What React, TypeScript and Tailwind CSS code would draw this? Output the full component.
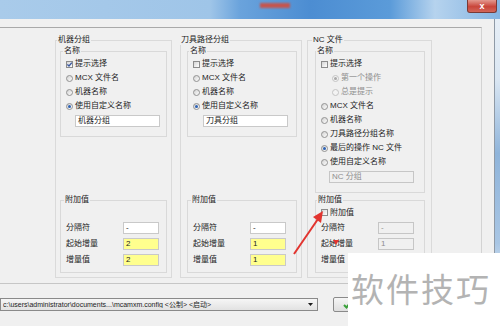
import React from 'react';

type Tone = 'white' | 'yellow' | 'disabled';

function CheckBox({ checked = false, disabled = false }: { checked?: boolean; disabled?: boolean }) {
  return (
    <span
      className={`w-[7px] h-[7px] shrink-0 border flex items-center justify-center ${
        disabled ? 'border-[#c0c0c0] bg-[#f4f4f4]' : 'border-[#8c8c8c] bg-[linear-gradient(135deg,#d4d4d4,#ffffff)]'
      }`}
    >
      {checked && (
        <svg width="5" height="5" viewBox="0 0 5 5">
          <path d="M0.4 2.4 L2 4 L4.8 0.6" fill="none" stroke="#3a58a0" strokeWidth="1.3" />
        </svg>
      )}
    </span>
  );
}

function Radio({ checked = false, disabled = false }: { checked?: boolean; disabled?: boolean }) {
  return (
    <span
      className={`w-[7px] h-[7px] shrink-0 rounded-full border flex items-center justify-center ${
        disabled ? 'border-[#c4c4c4] bg-[#f3f3f3]' : 'border-[#929292] bg-[linear-gradient(135deg,#d2d2d2,#fdfdfd)]'
      }`}
    >
      {checked && (
        <span className={`w-[3px] h-[3px] rounded-full ${disabled ? 'bg-[#a9a9a9]' : 'bg-[#2d62b4]'}`} />
      )}
    </span>
  );
}

function Option({
  kind,
  label,
  checked,
  disabled,
  indent,
}: {
  kind: 'check' | 'radio';
  label: string;
  checked?: boolean;
  disabled?: boolean;
  indent?: boolean;
}) {
  return (
    <div className={`h-[14px] flex items-center gap-[2px] ${indent ? 'pl-[11px]' : ''}`}>
      {kind === 'check' ? <CheckBox checked={checked} disabled={disabled} /> : <Radio checked={checked} disabled={disabled} />}
      <span className={disabled ? 'text-[#8e8e8e]' : 'text-[#1c1c1c]'}>{label}</span>
    </div>
  );
}

function Field({ value, tone, className = '' }: { value: string; tone: Tone; className?: string }) {
  const look =
    tone === 'yellow'
      ? 'bg-[#ffff8e] border-[#c9c9c9] text-[#1c1c1c]'
      : tone === 'disabled'
      ? 'bg-[#f0f0f0] border-[#c6c6c6] text-[#8e8e8e]'
      : 'bg-white border-[#c9c9c9] text-[#1c1c1c]';
  return <div className={`h-[12px] border flex items-center pl-[2px] ${look} ${className}`}>{value}</div>;
}

function ValueRow({ label, value, tone }: { label: string; value: string; tone: Tone }) {
  return (
    <div className="h-[16px] flex items-center">
      <span className="w-[57px] text-[#1c1c1c]">{label}</span>
      <Field value={value} tone={tone} className="w-[36px]" />
    </div>
  );
}

function Extra({ start, step, muted, legendClass }: { start: string; step: string; muted?: boolean; legendClass: string }) {
  return (
    <fieldset className="mt-auto border border-[#d9d9d9] px-[5px] pb-[4px]">
      <legend className={`px-[1px] leading-[10px] text-[#1c1c1c] ${legendClass}`}>附加值</legend>
      <div className="h-[15px] flex items-center">{muted && <Option kind="check" label="附加值" />}</div>
      <ValueRow label="分隔符" value="-" tone={muted ? 'disabled' : 'white'} />
      <ValueRow label="起始增量" value={start} tone={muted ? 'disabled' : 'yellow'} />
      <ValueRow label="增量值" value={step} tone={muted ? 'disabled' : 'yellow'} />
    </fieldset>
  );
}

function Group({ title, className, legendClass, children }: { title: string; className: string; legendClass: string; children: React.ReactNode }) {
  return (
    <fieldset className={`border border-[#dadada] pb-[4px] ${className}`}>
      <legend className={`px-[1px] leading-[10px] text-[#1c1c1c] ${legendClass}`}>{title}</legend>
      <div className="h-[228px] flex flex-col">{children}</div>
    </fieldset>
  );
}

function NameBox({ legendClass, children }: { legendClass: string; children: React.ReactNode }) {
  return (
    <fieldset className="mt-[1px] border border-[#d9d9d9] px-[5px] pt-[1px] pb-[9px]">
      <legend className={`px-[1px] leading-[10px] text-[#1c1c1c] ${legendClass}`}>名称</legend>
      {children}
    </fieldset>
  );
}

export default function App() {
  return (
    <div className="relative w-[500px] h-[326px] overflow-hidden bg-[#f0f0f0] font-['Liberation_Sans','Noto_Sans_CJK_SC',sans-serif] text-[8px] leading-none">
      {/* title bar */}
      <div className="h-[19px] flex items-start bg-[linear-gradient(90deg,#a9cbea_0%,#9fc5e8_42%,#6aa3dc_48%,#4c8dd2_62%,#5b9bd9_78%,#b6d3ee_87%,#84b4e2_100%)]">
        <div className="ml-[260px] mt-[3px] w-[30px] h-[5px] bg-[#c4554f] blur-[1px]" />
        <div className="ml-auto mr-[3px] w-[30px] h-[13px] rounded-b-[3px] border border-t-0 border-[#7a3a36] bg-[linear-gradient(180deg,#e3998f,#c9453a_55%,#d2675a)] flex items-center justify-center text-white text-[9px] font-bold">
          x
        </div>
      </div>

      <div className="flex">
        <div className="flex-1 pt-[8px]">
          {/* outer frame */}
          <div className="w-[482px] h-[257px] border-t border-r border-b border-t-[#a9a9a9] border-r-[#d3d3d3] border-b-[#c6c6c6] pt-[7px] pb-[5px] pl-[55px] flex items-start">
            <Group title="机器分组" className="w-[117px] px-[4px]" legendClass="ml-[-3px]">
              <NameBox legendClass="ml-[-3px]">
                <Option kind="check" label="提示选择" checked />
                <Option kind="radio" label="MCX 文件名" />
                <Option kind="radio" label="机器名称" />
                <Option kind="radio" label="使用自定义名称" checked />
                <Field value="机器分组" tone="white" className="mt-[2px] ml-[9px] w-[85px]" />
              </NameBox>
              <Extra start="2" step="2" legendClass="ml-[-2px]" />
            </Group>

            <Group title="刀具路径分组" className="ml-[8px] w-[122px] pl-[6px] pr-[4px]" legendClass="ml-[-7px]">
              <NameBox legendClass="ml-[-4px]">
                <Option kind="check" label="提示选择" />
                <Option kind="radio" label="MCX 文件名" />
                <Option kind="radio" label="机器名称" />
                <Option kind="radio" label="使用自定义名称" checked />
                <Field value="刀具分组" tone="white" className="mt-[2px] ml-[10px] w-[85px]" />
              </NameBox>
              <Extra start="1" step="1" legendClass="ml-[-2px]" />
            </Group>

            <Group title="NC 文件" className="ml-[5px] w-[125px] pl-[7px] pr-[6px]" legendClass="ml-[-3px]">
              <NameBox legendClass="ml-[-5px]">
                <Option kind="check" label="提示选择" />
                <Option kind="radio" label="第一个操作" checked disabled indent />
                <Option kind="radio" label="总是提示" disabled indent />
                <Option kind="radio" label="MCX 文件名" />
                <Option kind="radio" label="机器名称" />
                <Option kind="radio" label="刀具路径分组名称" />
                <Option kind="radio" label="最后的操作 NC 文件" checked />
                <Option kind="radio" label="使用自定义名称" />
                <Field value="NC 分组" tone="disabled" className="mt-[2px] ml-[8px] w-[85px]" />
              </NameBox>
              <Extra start="1" step="" muted legendClass="ml-[-4px]" />
            </Group>
          </div>

          {/* config path */}
          <div className="mt-[13px] flex items-center">
            <div className="w-[318px] h-[13px] border border-[#8a8a8a] bg-[linear-gradient(180deg,#f6f6f6,#e2e2e2)] flex items-center pl-[2px] pr-[4px] text-[7px] text-[#1c1c1c]">
              <span className="flex-1 truncate">{'c:\\users\\administrator\\documents...\\mcamxm.config <公制> <启动>'}</span>
              <svg width="5" height="3" viewBox="0 0 5 3">
                <path d="M0 0 H5 L2.5 3 Z" fill="#1c1c1c" />
              </svg>
            </div>
            <div className="ml-[15px] w-[50px] h-[15px] rounded-[2px] border border-[#8a8a8a] bg-[linear-gradient(180deg,#f6f6f6,#dedede)] flex items-center pl-[9px]">
              <svg width="9" height="8" viewBox="0 0 9 8">
                <path d="M1 4 L3.5 6.5 L8 1" fill="none" stroke="#3aa13a" strokeWidth="2" />
              </svg>
            </div>
          </div>
        </div>

        {/* window right edge */}
        <div className="w-[6px] h-[299px] border-l border-[#8f9aa6] bg-[linear-gradient(180deg,#e6eef6_0%,#dbe7f3_20%,#8fb4da_45%,#a9c6e4_75%,#e6eef6_90%)]" />
      </div>

      {/* window bottom edge */}
      <div className="mt-[8px] h-[8px] border-t border-[#d4e3f2] bg-[linear-gradient(180deg,#a7c5e4,#88aed6)]" />

      {/* red annotation arrow */}
      <svg className="absolute left-0 top-0 pointer-events-none" width="500" height="326" viewBox="0 0 500 326">
        <line x1="294" y1="254" x2="318" y2="219" stroke="#e2342f" strokeWidth="2" />
        <path d="M323 211 L321 223 L313 217 Z" fill="#e2342f" />
        <path d="M333 240 L339 240 L336 245 Z" fill="#e2342f" />
      </svg>

      {/* watermark */}
      <div className="absolute left-[348px] top-[253px] right-0 bottom-0 bg-white pl-[3px] pt-[19px] text-[33px] tracking-[2px] text-[#b3b3b3] font-['Noto_Sans_CJK_SC',sans-serif]">
        软件技巧
      </div>
    </div>
  );
}
